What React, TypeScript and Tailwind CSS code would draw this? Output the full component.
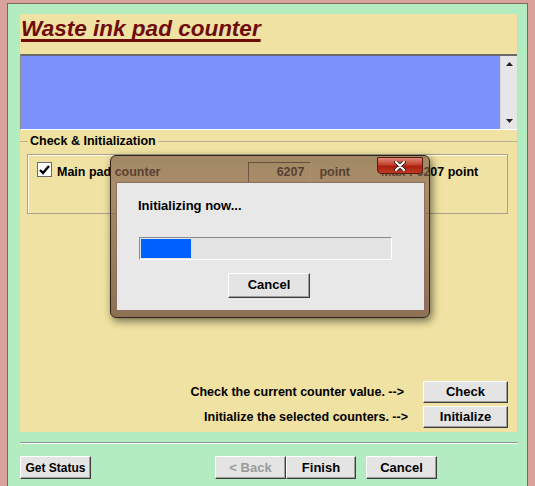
const font = { fontFamily: '"Liberation Sans", Arial, sans-serif' };

const btn =
  'flex items-center justify-center bg-[#e4e4e4] border border-t-white border-l-white border-r-[#3c3c3c] border-b-[#3c3c3c] shadow-[inset_-1px_-1px_0_#a0a0a0] text-[12px] font-bold';

function ProgressDialog() {
  return (
    <div className="absolute left-[110px] top-[155px] h-[163px] w-[320px] rounded-[6px] border border-[#2e2019] bg-[linear-gradient(180deg,rgba(112,82,62,0.62)_0%,rgba(140,104,80,0.7)_18%,rgba(120,88,68,0.82)_100%)] shadow-[2px_3px_8px_rgba(0,0,0,0.55)]">
      <div className="absolute right-[6px] top-[1px] flex h-[17px] w-[46px] items-center justify-center rounded-b-[4px] border border-[#5a1a12] bg-[linear-gradient(180deg,#e08878_0%,#c4402c_45%,#a8200e_55%,#c03a24_100%)]">
        <svg width="12" height="10" viewBox="0 0 12 10">
          <path d="M2 1 L10 9 M10 1 L2 9" stroke="#3a1a14" strokeWidth="4" strokeLinecap="round" />
          <path d="M2 1 L10 9 M10 1 L2 9" stroke="#ffffff" strokeWidth="2.2" strokeLinecap="round" />
        </svg>
      </div>
      <div className="absolute bottom-[6px] left-[5px] right-[4px] top-[26px] border border-[#8a7060] bg-[#e8e8e8]">
        <div className="pl-[21px] pt-[13px] text-[13px] font-bold text-black">Initializing now...</div>
        <div className="ml-[22px] mt-[21px] h-[23px] w-[253px] border border-t-[#8a8a8a] border-l-[#8a8a8a] border-b-white border-r-white bg-[#e4e4e4] p-[1px]">
          <div className="h-full w-[50px] bg-[#0060ff]" />
        </div>
        <div className="mt-[13px] flex justify-center pr-[3px]">
          <div className={`${btn} h-[25px] w-[82px] text-[13px] text-black`}>Cancel</div>
        </div>
      </div>
    </div>
  );
}

export default function App() {
  return (
    <div style={font} className="relative flex h-[486px] w-[535px] flex-col overflow-hidden bg-[#d9a39c] px-[7px] pt-[3px]">
      <div className="flex flex-1 flex-col border border-b-0 border-[#7e6660] bg-[#b4ecc2] pl-[12px] pr-[9px] pt-[10px]">
        <div className="flex h-[418px] flex-col border-r border-[#d8d4c0] bg-[#efe2a2]">
          <div className="h-[40px] pl-[1px] pt-[2px]">
            <span className="text-[22.5px] font-bold italic leading-[26px] text-[#6e0c0c] underline decoration-[3px] underline-offset-[3px] [text-decoration-skip-ink:none]">
              Waste ink pad counter
            </span>
          </div>
          <div className="flex h-[76px] border-l border-t-2 border-l-[#8a8a8a] border-t-[#6a6a6a] border-b border-b-white">
            <div className="flex-1 bg-[#7b92fc]" />
            <div className="flex w-[17px] flex-col items-center justify-between border-l border-[#d8d8d8] bg-[#e6e6e6] py-[6px]">
              <svg width="7" height="4" viewBox="0 0 7 4"><path d="M3.5 0 L7 4 L0 4 Z" fill="#222" /></svg>
              <svg width="7" height="4" viewBox="0 0 7 4"><path d="M0 0 L7 0 L3.5 4 Z" fill="#222" /></svg>
            </div>
          </div>
          <div className="relative mt-[11px] flex flex-1 flex-col border-t border-[#b9b196] pl-[7px] pr-[9px]">
            <div className="absolute -top-[9px] left-[8px] bg-[#efe2a2] px-[2px] text-[12.5px] font-bold leading-[16px] text-black">
              Check &amp; Initialization
            </div>
            <div className="mt-[12px] flex h-[60px] items-start border border-[#a8a28c] shadow-[inset_1px_1px_0_#fffbe8] pl-[9px] pt-[7px] text-black">
              <div className="flex h-[15px] w-[15px] items-center justify-center border border-[#6a6a6a] bg-white">
                <svg width="11" height="10" viewBox="0 0 11 10"><path d="M1 5 L4 8 L10 1" stroke="#000" strokeWidth="2.4" fill="none" /></svg>
              </div>
              <span className="ml-[5px] mt-[1px] text-[12.5px] font-bold">Main pad counter</span>
              <div className="ml-[88px] flex h-[21px] w-[63px] items-center justify-end border border-t-[#4a4036] border-l-[#4a4036] border-b-[#fff8e0] border-r-[#fff8e0] pr-[6px] text-[12.5px] font-bold">
                6207
              </div>
              <span className="ml-[8px] mt-[1px] text-[12.5px] font-bold">point</span>
              <span className="ml-[31px] mt-[1px] text-[12.5px] font-bold">Max : 6207 point</span>
            </div>
            <div className="mt-auto mb-[4px] flex flex-col gap-[3px] text-black">
              <div className="flex items-center justify-end gap-[19px]">
                <span className="text-[12.5px] font-bold">Check the current counter value. --&gt;</span>
                <div className={`${btn} h-[22px] w-[85px] text-[13px]`}>Check</div>
              </div>
              <div className="flex items-center justify-end gap-[15px]">
                <span className="text-[12.5px] font-bold">Initialize the selected counters. --&gt;</span>
                <div className={`${btn} h-[22px] w-[85px] text-[13px]`}>Initialize</div>
              </div>
            </div>
          </div>
        </div>
        <div className="mt-[10px] border-t border-b border-t-[#8a948c] border-b-white" />
        <div className="mt-[12px] flex items-center text-black">
          <div className={`${btn} h-[23px] w-[71px]`}>Get Status</div>
          <div className={`${btn} ml-[124px] h-[23px] w-[71px] text-[13px] !text-[#9a9a9a]`}>&lt; Back</div>
          <div className={`${btn} h-[23px] w-[70px] text-[13px]`}>Finish</div>
          <div className={`${btn} ml-[10px] h-[23px] w-[71px] text-[13px]`}>Cancel</div>
        </div>
      </div>
      <ProgressDialog />
    </div>
  );
}
